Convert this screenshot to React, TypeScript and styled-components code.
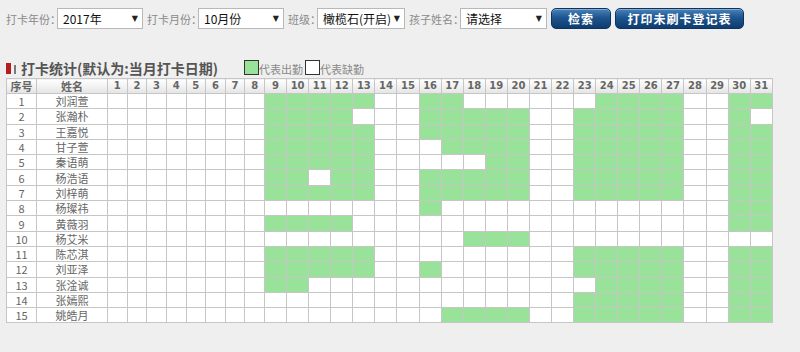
import React from 'react';
import styled, { createGlobalStyle } from 'styled-components';

const GlobalStyle = createGlobalStyle`
  html, body {
    margin: 0;
    padding: 0;
    background: #efefef;
    font-family: "Noto Sans CJK SC", "DejaVu Sans", sans-serif;
  }
`;

const Page = styled.div`
  width: 800px;
  height: 352px;
  padding: 8px 0 0 6px;
  box-sizing: border-box;
  overflow: hidden;
`;

const Toolbar = styled.div`
  display: flex;
  align-items: center;
  height: 21px;
`;

const Label = styled.span`
  font-size: 11px;
  color: #8a8a8a;
  margin-right: -4px;
  white-space: nowrap;
`;

const FakeSelect = styled.div<{ $w: number }>`
  width: ${(p) => p.$w}px;
  height: 21px;
  box-sizing: border-box;
  border: 1px solid #b8b8b8;
  background: #fff;
  display: flex;
  align-items: center;
  justify-content: space-between;
  padding: 0 4px 0 5px;
  margin-right: 4px;
  font-size: 12px;
  color: #111;
  white-space: nowrap;
`;

const Arrow = styled.span`
  font-size: 8px;
  color: #222;
  font-family: "DejaVu Sans", sans-serif;
`;

const BlueButton = styled.button<{ $w: number }>`
  width: ${(p) => p.$w}px;
  height: 21px;
  margin-left: 0;
  margin-right: 4px;
  border: 1px solid #0b3462;
  border-radius: 5px;
  background: linear-gradient(#4a82b8 0%, #1d5590 45%, #0f3d6e 100%);
  box-shadow: inset 0 1px 0 rgba(255, 255, 255, 0.35);
  color: #fff;
  font-family: "Noto Sans CJK SC", sans-serif;
  font-size: 12px;
  font-weight: bold;
  letter-spacing: 1px;
  padding: 0;
  cursor: pointer;
`;

const TitleRow = styled.div`
  display: flex;
  align-items: flex-end;
  margin-top: 29px;
  height: 20px;
`;

const Marker = styled.span`
  display: inline-block;
  width: 5px;
  height: 11px;
  background: #b41e1e;
  margin: 0 2px 4px 0;
`;

const MarkerBar = styled.span`
  display: inline-block;
  width: 2px;
  height: 9px;
  background: #7a7a7a;
  margin: 0 5px 4px 1px;
`;

const Title = styled.span`
  font-size: 14px;
  font-weight: bold;
  color: #555;
  line-height: 20px;
  width: 223px;
  white-space: nowrap;
`;

const LegendBox = styled.span<{ $green?: boolean }>`
  display: inline-block;
  width: 13px;
  height: 13px;
  border: 1px solid #333;
  background: ${(p) => (p.$green ? '#98e29a' : '#fff')};
  margin: 0 0 3px 0;
`;

const LegendText = styled.span`
  font-size: 11px;
  color: #8a8a8a;
  line-height: 17px;
  margin-right: 2px;
`;

const Table = styled.table`
  border-collapse: collapse;
  table-layout: fixed;
  width: 766px;
  background: #fff;
`;

const Th = styled.th`
  height: 14px;
  padding: 0;
  border: 1px solid #c6c6c6;
  background: linear-gradient(#ffffff, #e4e4e4);
  color: #666;
  font-size: 11px;
  font-weight: bold;
  text-align: center;
  line-height: 14px;
  overflow: hidden;
`;

const DayTh = styled(Th)`
  font-family: "DejaVu Sans", sans-serif;
  font-size: 10px;
`;

const Td = styled.td`
  height: 14.3px;
  padding: 0;
  border: 1px solid #c6c6c6;
  color: #666;
  font-size: 11px;
  text-align: center;
  line-height: 14px;
  overflow: hidden;
  white-space: nowrap;
`;

const DayCell = styled.td<{ $on: boolean }>`
  padding: 0;
  border: 1px solid #c6c6c6;
  background: ${(p) => (p.$on ? '#98e29a' : '#fff')};
`;

const range = (a: number, b: number) => Array.from({ length: b - a + 1 }, (_, i) => a + i);

const kids: { name: string; days: number[] }[] = [
  { name: '刘润萱', days: [...range(9, 13), 16, 17, ...range(24, 27), 30, 31] },
  { name: '张瀚朴', days: [...range(9, 12), ...range(16, 20), ...range(23, 27), 30] },
  { name: '王嘉悦', days: [...range(9, 13), ...range(16, 20), ...range(23, 27), 30, 31] },
  { name: '甘子萱', days: [...range(9, 13), ...range(17, 20), ...range(23, 27), 30, 31] },
  { name: '秦语萌', days: [...range(9, 13), 19, 20, ...range(23, 27), 30, 31] },
  { name: '杨浩语', days: [9, 10, 12, 13, ...range(16, 20), ...range(23, 27), 30, 31] },
  { name: '刘梓萌', days: [...range(9, 13), ...range(16, 20), ...range(23, 27), 30, 31] },
  { name: '杨璨祎', days: [16, 30, 31] },
  { name: '黄薇羽', days: [...range(9, 12), 30, 31] },
  { name: '杨艾米', days: [18, 19, 20] },
  { name: '陈芯淇', days: [...range(9, 13), ...range(23, 27), 30, 31] },
  { name: '刘亚泽', days: [...range(9, 13), 16, ...range(23, 27), 30, 31] },
  { name: '张淦诚', days: [9, 10, ...range(24, 27), 30, 31] },
  { name: '张嫣熙', days: [...range(23, 27), 30, 31] },
  { name: '姚皓月', days: [...range(17, 20), ...range(23, 27), 30, 31] },
];

const days = range(1, 31);

export default function App() {
  return (
    <Page>
      <GlobalStyle />
      <Toolbar>
        <Label>打卡年份：</Label>
        <FakeSelect $w={86}>
          <span>2017年</span>
          <Arrow>▼</Arrow>
        </FakeSelect>
        <Label>打卡月份：</Label>
        <FakeSelect $w={86}>
          <span>10月份</span>
          <Arrow>▼</Arrow>
        </FakeSelect>
        <Label>班级：</Label>
        <FakeSelect $w={88}>
          <span>橄榄石(开启)</span>
          <Arrow>▼</Arrow>
        </FakeSelect>
        <Label>孩子姓名：</Label>
        <FakeSelect $w={87}>
          <span>请选择</span>
          <Arrow>▼</Arrow>
        </FakeSelect>
        <BlueButton $w={60}>检索</BlueButton>
        <BlueButton $w={129}>打印未刷卡登记表</BlueButton>
      </Toolbar>

      <TitleRow>
        <Marker />
        <MarkerBar />
        <Title>打卡统计(默认为:当月打卡日期)</Title>
        <LegendBox $green />
        <LegendText>代表出勤</LegendText>
        <LegendBox />
        <LegendText>代表缺勤</LegendText>
      </TitleRow>

      <Table>
        <colgroup>
          <col style={{ width: 30 }} />
          <col style={{ width: 71 }} />
          {days.map((d) => (
            <col key={d} style={{ width: d <= 8 ? 19.625 : 22.087 }} />
          ))}
        </colgroup>
        <thead>
          <tr>
            <Th>序号</Th>
            <Th>姓名</Th>
            {days.map((d) => (
              <DayTh key={d}>{d}</DayTh>
            ))}
          </tr>
        </thead>
        <tbody>
          {kids.map((k, i) => (
            <tr key={k.name}>
              <Td>{i + 1}</Td>
              <Td>{k.name}</Td>
              {days.map((d) => (
                <DayCell key={d} $on={k.days.includes(d)} />
              ))}
            </tr>
          ))}
        </tbody>
      </Table>
    </Page>
  );
}
